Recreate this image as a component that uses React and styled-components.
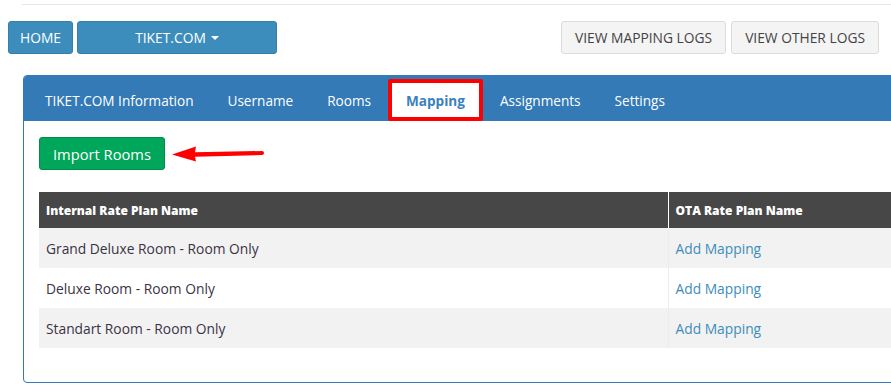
import React from 'react'
import styled, { createGlobalStyle } from 'styled-components'

const GlobalStyle = createGlobalStyle`
  html, body {
    margin: 0;
    padding: 0;
    background: #fff;
    overflow: hidden;
  }
  body {
    font-family: "Open Sans", "Liberation Sans", sans-serif;
    color: #333;
  }
`

const Page = styled.div`
  width: 891px;
  height: 391px;
  overflow: hidden;
`

const TopRule = styled.div`
  height: 1px;
  margin: 4px 0 0 22px;
  background: #e6e6e6;
`

const Toolbar = styled.div`
  display: flex;
  justify-content: space-between;
  margin-top: 16px;
  padding: 0 12px 0 8px;
`

const Group = styled.div`
  display: flex;
  gap: ${p => p.$gap || 4}px;
`

const Btn = styled.button`
  height: 33px;
  box-sizing: border-box;
  border-radius: 3px;
  font-family: inherit;
  font-size: 13.8px;
  padding: 0 ${p => (p.$variant === 'default' ? 13 : 11)}px;
  display: flex;
  align-items: center;
  justify-content: center;
  cursor: pointer;
  background: ${p => (p.$variant === 'default' ? '#f4f4f4' : '#3c8dbc')};
  border: 1px solid ${p => (p.$variant === 'default' ? '#dcdcdc' : '#367fa9')};
  color: ${p => (p.$variant === 'default' ? '#444' : '#fff')};
  width: ${p => (p.$width ? `${p.$width}px` : 'auto')};
`

const Caret = styled.span`
  display: inline-block;
  margin-left: 5px;
  border-top: 4px solid #fff;
  border-left: 4px solid transparent;
  border-right: 4px solid transparent;
`

const Panel = styled.div`
  margin: 21px 0 0 23px;
  width: 900px;
  height: 308px;
  box-sizing: border-box;
  border: 1px solid #337ab7;
  border-radius: 4px;
  overflow: hidden;
`

const TabBar = styled.ul`
  display: flex;
  list-style: none;
  margin: 0;
  padding: 0 0 0 4px;
  height: 45px;
  background: #337ab7;
  align-items: flex-end;
`

const Tab = styled.li`
  box-sizing: border-box;
  height: ${p => (p.$active ? 42 : 45)}px;
  padding: 0 ${p => (p.$active ? 14 : 17)}px;
  display: flex;
  align-items: center;
  padding-top: ${p => (p.$active ? 0 : 4)}px;
  font-size: 13.6px;
  font-weight: ${p => (p.$active ? 700 : 500)};
  color: ${p => (p.$active ? '#3a80c0' : '#fff')};
  background: ${p => (p.$active ? '#fff' : 'transparent')};
  border: ${p => (p.$active ? '4px solid #ff0000' : 'none')};
  border-radius: ${p => (p.$active ? '2px' : '0')};
`

const Body = styled.div`
  padding: 16px 15px 0 15px;
`

const ActionRow = styled.div`
  display: flex;
  align-items: center;
  gap: 5px;
`

const SuccessBtn = styled.button`
  height: 33px;
  padding: 0 13px;
  background: #00a65a;
  border: 1px solid #008d4c;
  border-radius: 3px;
  color: #fff;
  font-family: inherit;
  font-size: 14.7px;
`

const Table = styled.table`
  margin-top: 22px;
  border-collapse: collapse;
  width: 900px;
  font-size: 13.8px;
`

const Th = styled.th`
  background: #474747;
  color: #fff;
  text-align: left;
  font-size: 12px;
  font-weight: 800;
  height: 36px;
  padding: 0 7px;
  width: ${p => (p.$width ? `${p.$width}px` : 'auto')};
  border-left: ${p => (p.$divider ? '1px solid #fff' : 'none')};
  box-sizing: border-box;
`

const Tr = styled.tr`
  background: ${p => (p.$odd ? '#f2f2f2' : '#fff')};
`

const Td = styled.td`
  height: 40px;
  padding: 0 7px;
  color: ${p => (p.$link ? '#3c8dbc' : '#3b3344')};
  border-left: ${p => (p.$divider ? '1px solid #ececec' : 'none')};
`

const rows = [
  'Grand Deluxe Room - Room Only',
  'Deluxe Room - Room Only',
  'Standart Room - Room Only',
]

const tabs = ['TIKET.COM Information', 'Username', 'Rooms', 'Mapping', 'Assignments', 'Settings']

const Arrow = () => (
  <svg width="96" height="20" viewBox="0 0 96 20">
    <path d="M2 10.5 L26 2.5 L25 8.2 L92 7 L92 11 L25 12.8 L26 17.5 Z" fill="#ff0000" />
    <circle cx="92" cy="9" r="2" fill="#ff0000" />
  </svg>
)

export default function App() {
  return (
    <Page>
      <GlobalStyle />
      <TopRule />
      <Toolbar>
        <Group>
          <Btn>HOME</Btn>
          <Btn $width={200}>
            TIKET.COM <Caret />
          </Btn>
        </Group>
        <Group $gap={5}>
          <Btn $variant="default">VIEW MAPPING LOGS</Btn>
          <Btn $variant="default">VIEW OTHER LOGS</Btn>
        </Group>
      </Toolbar>
      <Panel>
        <TabBar>
          {tabs.map(t => (
            <Tab key={t} $active={t === 'Mapping'}>
              {t}
            </Tab>
          ))}
        </TabBar>
        <Body>
          <ActionRow>
            <SuccessBtn>Import Rooms</SuccessBtn>
            <Arrow />
          </ActionRow>
          <Table>
            <thead>
              <tr>
                <Th $width={629}>Internal Rate Plan Name</Th>
                <Th $divider>OTA Rate Plan Name</Th>
              </tr>
            </thead>
            <tbody>
              {rows.map((r, i) => (
                <Tr key={r} $odd={i % 2 === 0}>
                  <Td>{r}</Td>
                  <Td $link $divider>Add Mapping</Td>
                </Tr>
              ))}
            </tbody>
          </Table>
        </Body>
      </Panel>
    </Page>
  )
}
